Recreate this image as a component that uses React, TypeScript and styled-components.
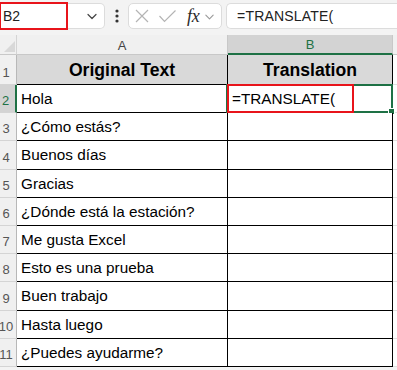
import styled, { createGlobalStyle } from 'styled-components';

const Global = createGlobalStyle`
  html, body { margin: 0; padding: 0; background: #f3f3f3; }
  body { font-family: "Liberation Sans", Arial, sans-serif; overflow: hidden; }
`;

const rows = [
  'Hola',
  '¿Cómo estás?',
  'Buenos días',
  'Gracias',
  '¿Dónde está la estación?',
  'Me gusta Excel',
  'Esto es una prueba',
  'Buen trabajo',
  'Hasta luego',
  '¿Puedes ayudarme?',
];

const Page = styled.div`
  width: 397px;
  height: 370px;
  background: #f3f3f3;
  display: flex;
  flex-direction: column;
`;

const FormulaBar = styled.div`
  height: 26px;
  margin-top: 3px;
  display: flex;
  align-items: stretch;
`;

const NameBox = styled.div`
  position: relative;
  width: 105px;
  box-sizing: border-box;
  background: #fff;
  border: 1px solid #dcdcdc;
  border-left: none;
  border-radius: 0 5px 5px 0;
  display: flex;
  align-items: center;
  justify-content: space-between;
  padding: 0 6px 0 3px;
  font-size: 14px;
  color: #222;
`;

const Annotation = styled.div<{ $inset: string }>`
  position: absolute;
  inset: ${p => p.$inset};
  border: 2px solid #e8141b;
  pointer-events: none;
`;

const Dots = styled.div`
  width: 23px;
  display: flex;
  align-items: center;
  justify-content: center;
`;

const ActionBox = styled.div`
  width: 94px;
  box-sizing: border-box;
  background: #fff;
  border: 1px solid #dcdcdc;
  border-radius: 5px;
  display: flex;
  align-items: center;
  padding-left: 5px;
  gap: 8px;
`;

const Fx = styled.span`
  font-family: "Liberation Serif", "Times New Roman", serif;
  font-style: italic;
  font-size: 18px;
  color: #2a2a2a;
  margin-left: 2px;
  letter-spacing: -0.3px;
  line-height: 1;
`;

const FxMenu = styled.span`
  display: flex;
  margin-left: -3px;
`;

const FormulaInput = styled.div`
  flex: 1;
  margin-left: 4px;
  background: #fff;
  border: 1px solid #dcdcdc;
  border-right: none;
  border-radius: 5px 0 0 5px;
  display: flex;
  align-items: center;
  padding-left: 10px;
  font-size: 14px;
  color: #222;
  letter-spacing: 0.2px;
`;

const Sheet = styled.div`
  margin-top: 6px;
  display: grid;
  grid-template-columns: 17px 211px 165px 1fr;
  grid-template-rows: 20px 30px repeat(10, 28.2px);
`;

const Corner = styled.div`
  background: #f0f0f0;
  border-bottom: 1px solid #c8c8c8;
  border-right: 1px solid #d4d4d4;
  box-sizing: border-box;
  position: relative;
  &::after {
    content: '';
    position: absolute;
    right: 1px;
    bottom: 2px;
    border-left: 11px solid transparent;
    border-bottom: 11px solid #d8d8d8;
  }
`;

const ColHead = styled.div<{ $sel?: boolean }>`
  box-sizing: border-box;
  background: ${p => (p.$sel ? '#d3d3d3' : '#f0f0f0')};
  border-right: 1px solid #c8c8c8;
  border-bottom: ${p => (p.$sel ? '2px solid #1e7145' : '1px solid #c8c8c8')};
  display: flex;
  align-items: center;
  justify-content: center;
  font-size: 13px;
  color: ${p => (p.$sel ? '#1e7145' : '#444')};
  padding-top: 1px;
`;

const ColEnd = styled.div`
  background: #f0f0f0;
  border-bottom: 1px solid #c8c8c8;
`;

const RowHead = styled.div<{ $sel?: boolean }>`
  box-sizing: border-box;
  background: ${p => (p.$sel ? '#d3d3d3' : '#f0f0f0')};
  border-bottom: 1px solid #d4d4d4;
  border-right: ${p => (p.$sel ? '2px solid #1e7145' : '1px solid #b8b8b8')};
  display: flex;
  align-items: flex-end;
  justify-content: center;
  padding: 0 4px 4px 0;
  font-size: 13px;
  color: ${p => (p.$sel ? '#1e7145' : '#555')};
  white-space: nowrap;
`;

const Cell = styled.div<{ $head?: boolean }>`
  box-sizing: border-box;
  position: relative;
  background: ${p => (p.$head ? '#d9d9d9' : '#fff')};
  border-right: 1px solid #000;
  border-bottom: 1px solid #000;
  display: flex;
  align-items: center;
  justify-content: ${p => (p.$head ? 'center' : 'flex-start')};
  padding: ${p => (p.$head ? '2px 0 0' : '1px 0 0 4px')};
  font-size: ${p => (p.$head ? '17.6px' : '15.3px')};
  font-weight: ${p => (p.$head ? 700 : 400)};
  color: #000;
  white-space: nowrap;
`;

const Filler = styled.div`
  background: #fff;
  border-bottom: 1px solid #e0e0e0;
`;

const Selection = styled.div`
  position: absolute;
  inset: -1px -1px -1px -2px;
  border: 2px solid #1e7145;
  pointer-events: none;
`;

const Handle = styled.div`
  position: absolute;
  right: -4px;
  bottom: -4px;
  width: 5px;
  height: 5px;
  background: #1e7145;
  border: 1px solid #fff;
`;

function Chevron({ size = 12, color = '#444' }: { size?: number; color?: string }) {
  return (
    <svg width={size} height={size} viewBox="0 0 12 12" fill="none">
      <path d="M2 4.5 L6 8.5 L10 4.5" stroke={color} strokeWidth={1.2} strokeLinecap="round" strokeLinejoin="round" />
    </svg>
  );
}

export default function App() {
  return (
    <Page>
      <Global />
      <FormulaBar>
        <NameBox>
          <span>B2</span>
          <Chevron />
          <Annotation $inset="-2px 36px -2px -1px" />
        </NameBox>
        <Dots>
          <svg width={4} height={14} viewBox="0 0 4 14">
            <circle cx={2} cy={2} r={1.6} fill="#333" />
            <circle cx={2} cy={7} r={1.6} fill="#333" />
            <circle cx={2} cy={12} r={1.6} fill="#333" />
          </svg>
        </Dots>
        <ActionBox>
          <svg width={16} height={16} viewBox="0 0 16 16" fill="none">
            <path d="M2 2 L14 14 M14 2 L2 14" stroke="#b4b4b4" strokeWidth={1.2} />
          </svg>
          <svg width={19} height={16} viewBox="0 0 19 16" fill="none">
            <path d="M1.5 8 L6.5 13.5 L17.5 2.5" stroke="#b4b4b4" strokeWidth={1.2} />
          </svg>
          <Fx>fx</Fx>
          <FxMenu>
            <Chevron size={11} color="#999" />
          </FxMenu>
        </ActionBox>
        <FormulaInput>=TRANSLATE(</FormulaInput>
      </FormulaBar>
      <Sheet>
        <Corner />
        <ColHead>A</ColHead>
        <ColHead $sel>B</ColHead>
        <ColEnd />

        <RowHead>1</RowHead>
        <Cell $head>Original Text</Cell>
        <Cell $head>Translation</Cell>
        <Filler />

        {rows.map((text, i) => {
          const n = i + 2;
          const sel = n === 2;
          return [
            <RowHead key={`h${n}`} $sel={sel}>{n}</RowHead>,
            <Cell key={`a${n}`}>{text}</Cell>,
            <Cell key={`b${n}`}>
              {sel && (
                <>
                  =TRANSLATE(
                  <Selection>
                    <Handle />
                  </Selection>
                  <Annotation $inset="-1px 38px -1px -1px" />
                </>
              )}
            </Cell>,
            <Filler key={`f${n}`} />,
          ];
        })}
      </Sheet>
    </Page>
  );
}
